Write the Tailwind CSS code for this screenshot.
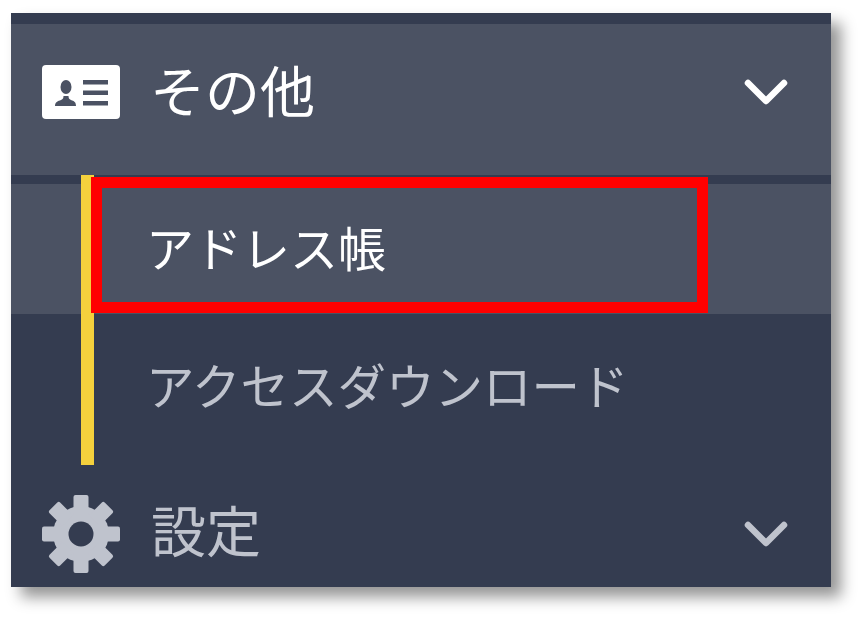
<!DOCTYPE html>
<html lang="ja">
<head>
<meta charset="utf-8">
<script src="https://cdn.jsdelivr.net/npm/@tailwindcss/browser@4"></script>
</head>
<body class="bg-white overflow-hidden font-['Noto_Sans_CJK_JP','Noto_Sans',sans-serif]">
<div class="w-[861px] h-[618px] pt-[13px] pl-[11px]">
  <div class="relative w-[820px] h-[574px] bg-[#343c50] pt-[11px] flex flex-col shadow-[10px_10px_14px_rgba(0,0,0,0.42)] blur-[0.7px]">
    <div class="h-[151px] bg-[#4b5263] flex items-center pb-[16px] pl-[31px] pr-[43px] text-white">
      <svg class="w-[78px] h-[54px] shrink-0" viewBox="0 0 78 54"><rect width="78" height="54" rx="4" fill="#fff"/><g fill="#4b5263"><ellipse cx="24" cy="22" rx="5.500" ry="7"/><path d="M13 41c0-4 3-5 6-6 2-1 2.500-2 2.500-4h5c0 2 .5 3 2.500 4 3 1 5 2 5 6z"/><rect x="41" y="15" width="25" height="4.500"/><rect x="41" y="25.500" width="25" height="4.500"/><rect x="41" y="36" width="25" height="4.500"/></g></svg>
      <span class="ml-[30px] text-[55px] leading-none relative top-[-3px]">その他</span>
      <svg class="ml-auto w-[44px] h-[28px]" viewBox="0 0 44 28"><path d="M4 5l18 18L40 5" fill="none" stroke="#fff" stroke-width="6.500" stroke-linecap="round" stroke-linejoin="round"/></svg>
    </div>
    <div class="mt-[9px] h-[130px] bg-[#4b5263] flex items-center pl-[135px] text-white text-[48px] leading-none"><span class="relative top-[-3px]">アドレス帳</span></div>
    <div class="h-[140px] flex items-center pl-[135px] text-[#bfc3cd] text-[48.500px] leading-none">アクセスダウンロード</div>
    <div class="flex-1 flex items-center pt-[26px] pl-[31px] pr-[43px] text-[#bfc3cd]">
      <svg class="w-[78px] h-[78px] shrink-0" viewBox="0 0 78 78"><g fill="#bfc3cd"><circle cx="39" cy="39" r="28"/><rect x="31.500" y="0" width="15" height="20" rx="2"/><rect x="31.500" y="0" width="15" height="20" rx="2" transform="rotate(45 39 39)"/><rect x="31.500" y="0" width="15" height="20" rx="2" transform="rotate(90 39 39)"/><rect x="31.500" y="0" width="15" height="20" rx="2" transform="rotate(135 39 39)"/><rect x="31.500" y="0" width="15" height="20" rx="2" transform="rotate(180 39 39)"/><rect x="31.500" y="0" width="15" height="20" rx="2" transform="rotate(225 39 39)"/><rect x="31.500" y="0" width="15" height="20" rx="2" transform="rotate(270 39 39)"/><rect x="31.500" y="0" width="15" height="20" rx="2" transform="rotate(315 39 39)"/></g><circle cx="39" cy="39" r="12.500" fill="#343c50"/></svg>
      <span class="ml-[31px] text-[55px] leading-none relative top-[-5px]">設定</span>
      <svg class="ml-auto w-[44px] h-[28px]" viewBox="0 0 44 28"><path d="M4 5l18 18L40 5" fill="none" stroke="#bfc3cd" stroke-width="6.500" stroke-linecap="round" stroke-linejoin="round"/></svg>
    </div>
    <div class="absolute left-[70px] top-[162px] w-[13px] h-[290px] bg-[#f5d13d]"></div>
    <div class="absolute left-[80px] top-[164px] w-[617px] h-[136px] border-[11px] border-[#ff0000]"></div>
  </div>
</div>
</body>
</html>
